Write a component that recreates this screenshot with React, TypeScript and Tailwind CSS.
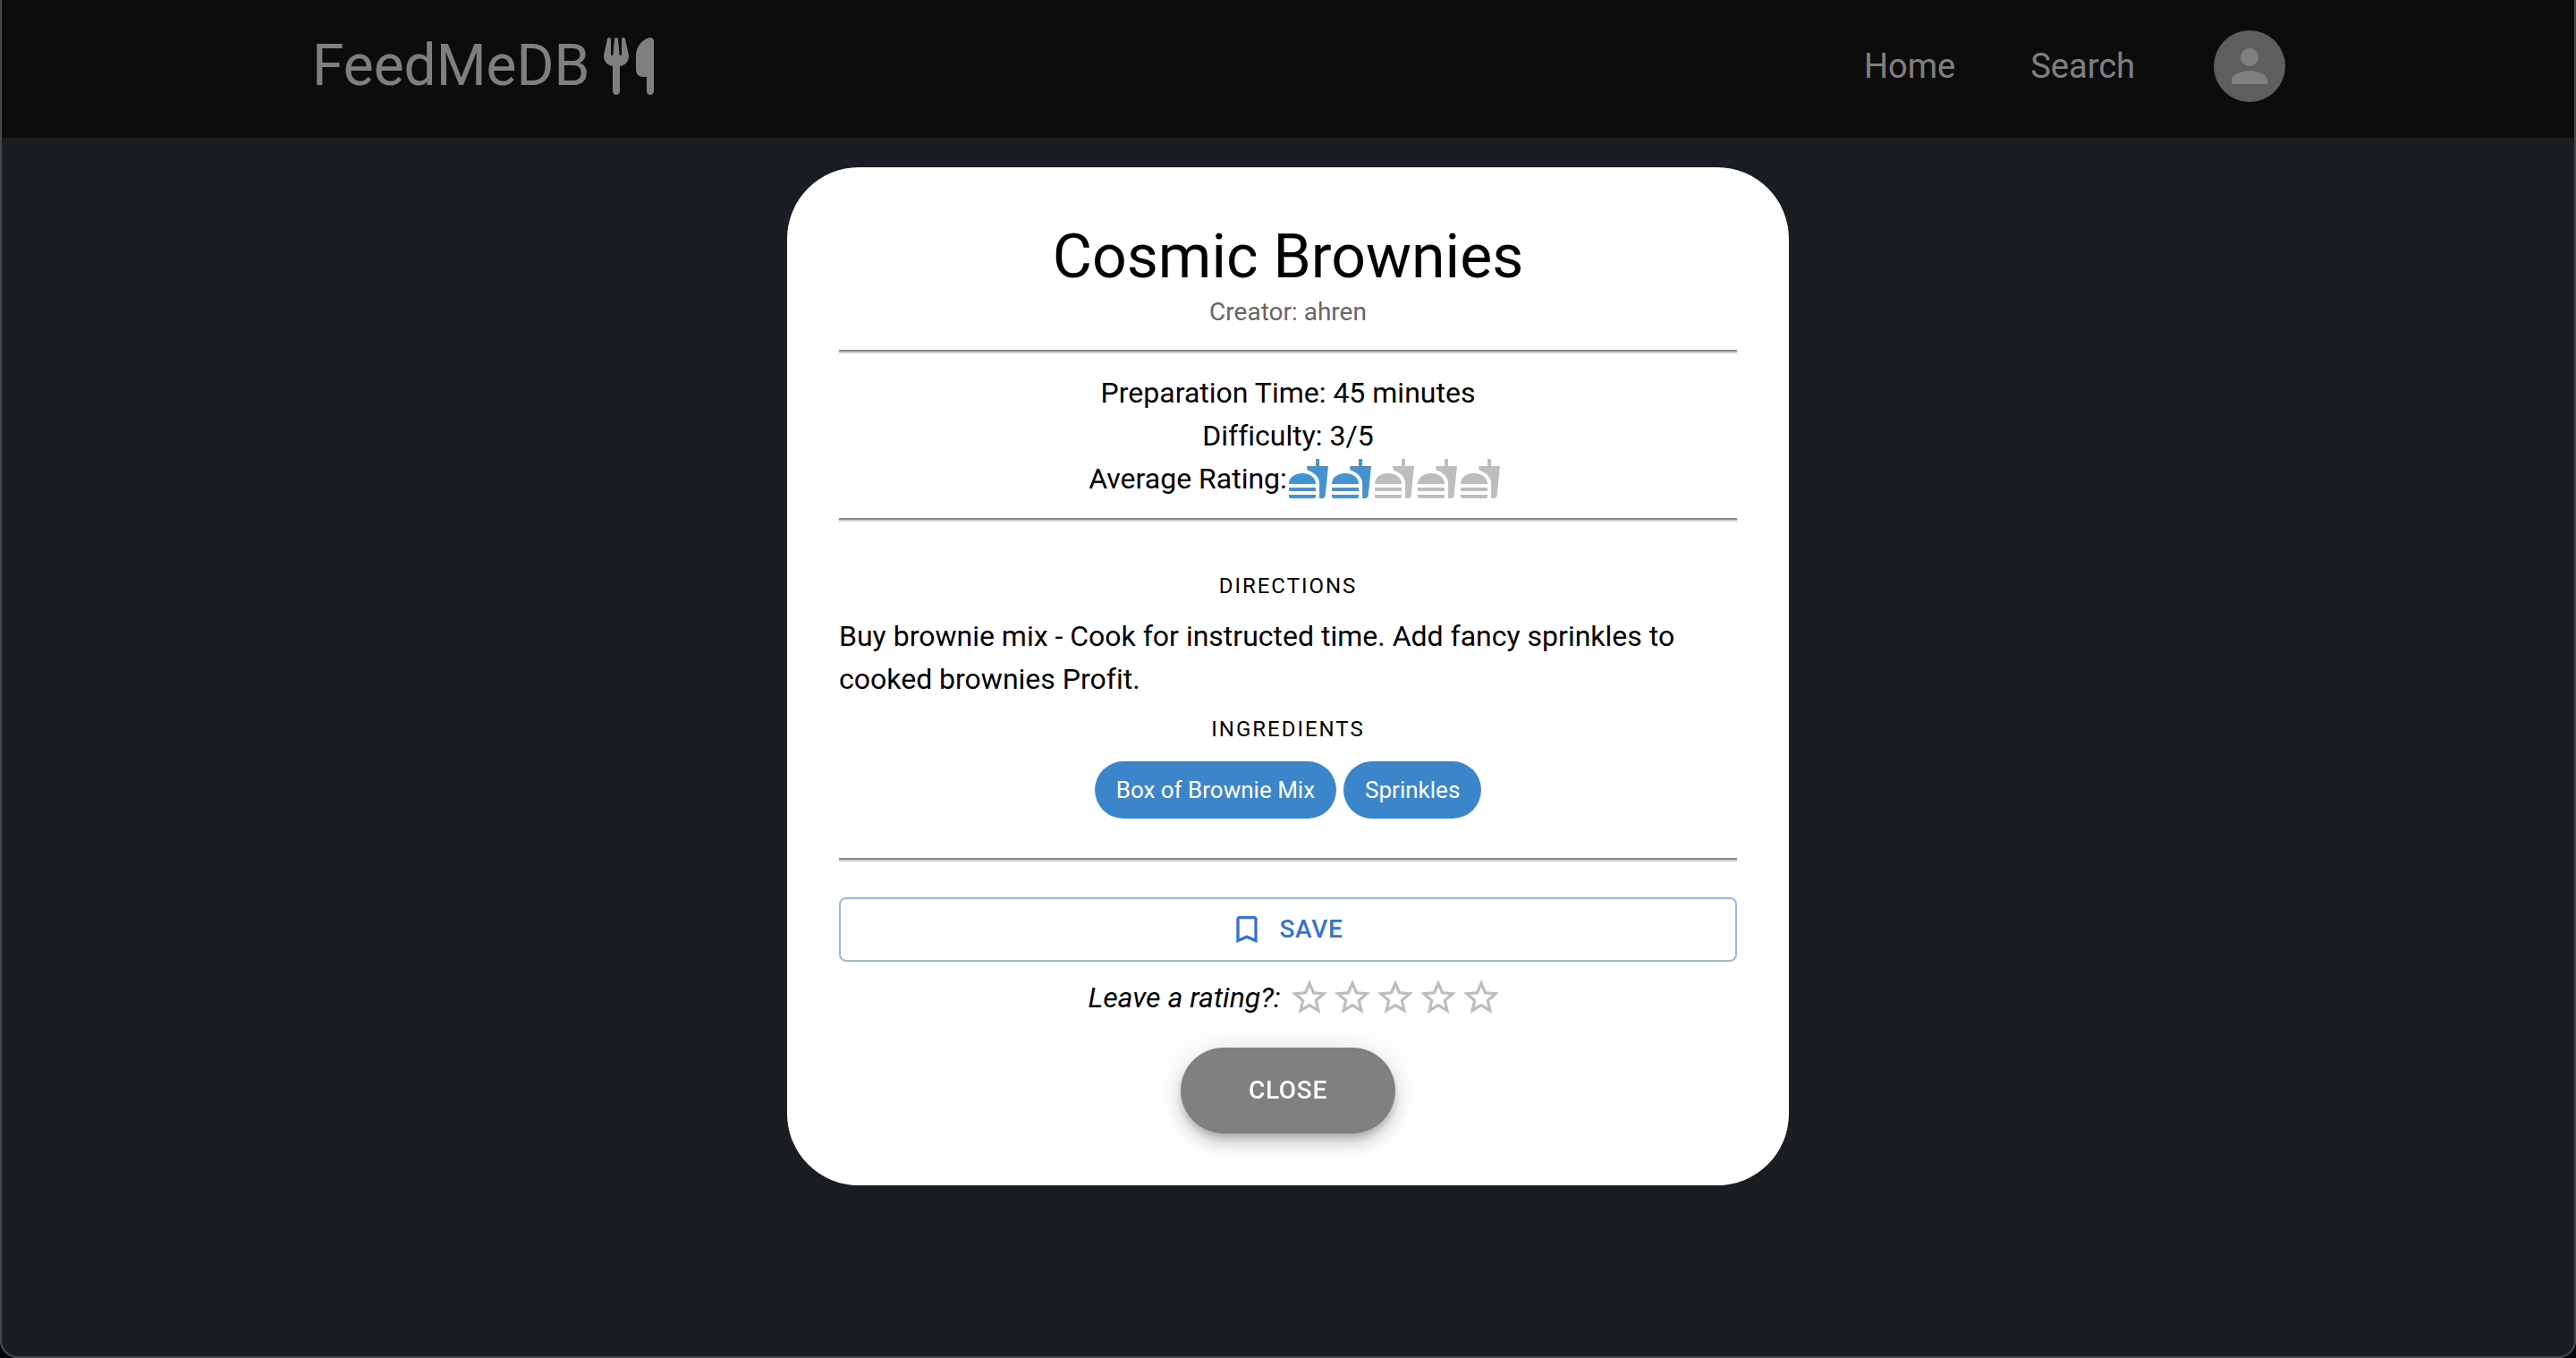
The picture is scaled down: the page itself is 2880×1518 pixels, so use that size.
import { useState } from "react";
import { FaUtensils } from "react-icons/fa6";
import { MdBookmarkBorder, MdFastfood, MdPerson, MdStarBorder } from "react-icons/md";

const averageRating = 2;
const steps = [1, 2, 3, 4, 5];
const ingredients = ["Box of Brownie Mix", "Sprinkles"];

function Header() {
  return (
    <header className="flex items-center justify-between bg-[#18181b] pt-[34px] pr-[325px] pb-10 pl-[349px] text-white">
      <a href="#" className="flex items-center gap-4 text-[64px] leading-[80px]">
        FeedMeDB
        <FaUtensils className="h-16 w-14" />
      </a>
      <nav className="flex items-center text-[38px] leading-[48px]">
        <a href="#home" className="mr-21">Home</a>
        <a href="#search" className="mr-22">Search</a>
        <button
          type="button"
          aria-label="Account"
          className="flex size-20 items-center justify-center rounded-full bg-[#bdbdbd]"
        >
          <MdPerson className="size-[60px]" />
        </button>
      </nav>
    </header>
  );
}

function Rule() {
  return <hr className="h-1 w-full border-t-2 border-b-2 border-t-[#8a8a8a] border-b-[#d0d0d0]" />;
}

function RecipeDialog() {
  const [rating, setRating] = useState(0);
  return (
    <div
      role="dialog"
      aria-modal="true"
      aria-labelledby="recipe-title"
      className="flex w-full max-w-[1120px] flex-col items-center rounded-[80px] bg-white p-[58px] text-[32px] leading-[48px] text-black [font-variant-ligatures:none]"
    >
      <h1 id="recipe-title" className="text-[68px] leading-[84px]">Cosmic Brownies</h1>
      <p className="mb-[22px] text-[28px] leading-[40px] text-[#666666]">Creator: ahren</p>
      <Rule />
      <div className="my-5 flex flex-col items-center">
        <p>Preparation Time: 45 minutes</p>
        <p>Difficulty: 3/5</p>
        <div className="flex items-center pl-4">
          <span>Average Rating:</span>
          <span role="img" aria-label="2 out of 5" className="flex">
            {steps.map((n) => (
              <MdFastfood
                key={n}
                className={n <= averageRating ? "size-12 text-[#4592d1]" : "size-12 text-[#bdbdbd]"}
              />
            ))}
          </span>
        </div>
      </div>
      <Rule />
      <h2 className="mt-10 text-[24px] leading-[64px] tracking-[2px]">DIRECTIONS</h2>
      <p className="w-full">
        Buy brownie mix - Cook for instructed time. Add fancy sprinkles to cooked brownies Profit.
      </p>
      <h2 className="text-[24px] leading-[64px] tracking-[2px]">INGREDIENTS</h2>
      <ul className="mt-1 mb-11 flex gap-2">
        {ingredients.map((name) => (
          <li key={name} className="rounded-full bg-[#3b86cb] px-6 text-[26px] leading-[64px] text-white">
            {name}
          </li>
        ))}
      </ul>
      <Rule />
      <button
        type="button"
        className="mt-10 mb-4 flex h-18 w-full items-center justify-center gap-4 rounded-lg border-2 border-[#96b9e6] pr-1 text-[28px] font-medium tracking-wide text-[#3474d0]"
      >
        <MdBookmarkBorder className="size-10" />
        SAVE
      </button>
      <fieldset className="flex items-center pl-4">
        <legend className="float-left italic">Leave a rating?:</legend>
        <span className="ml-2 flex">
          {steps.map((n) => (
            <label key={n} className="cursor-pointer">
              <input
                type="radio"
                name="rating"
                value={n}
                aria-label={`${n} stars`}
                checked={rating === n}
                onChange={() => setRating(n)}
                className="sr-only"
              />
              <MdStarBorder className={n <= rating ? "size-12 text-[#faaf00]" : "size-12 text-[#bdbdbd]"} />
            </label>
          ))}
        </span>
      </fieldset>
      <button
        type="button"
        className="mt-8 h-24 w-60 rounded-full bg-[#808080] text-[28px] font-medium tracking-wide text-white shadow-[0_6px_10px_-2px_rgba(0,0,0,0.2),0_12px_20px_0_rgba(0,0,0,0.14),0_2px_36px_0_rgba(0,0,0,0.12)]"
      >
        CLOSE
      </button>
    </div>
  );
}

export default function App() {
  return (
    <div className="bg-[#04050c] font-[Roboto,sans-serif]">
      <div className="min-h-screen rounded-b-[20px] bg-[#343b42]">
        <Header />
      </div>
      <div className="fixed inset-0 flex items-center justify-center rounded-b-[20px] border-2 border-t-0 border-[#464849] bg-black/50 pb-1">
        <RecipeDialog />
      </div>
    </div>
  );
}
